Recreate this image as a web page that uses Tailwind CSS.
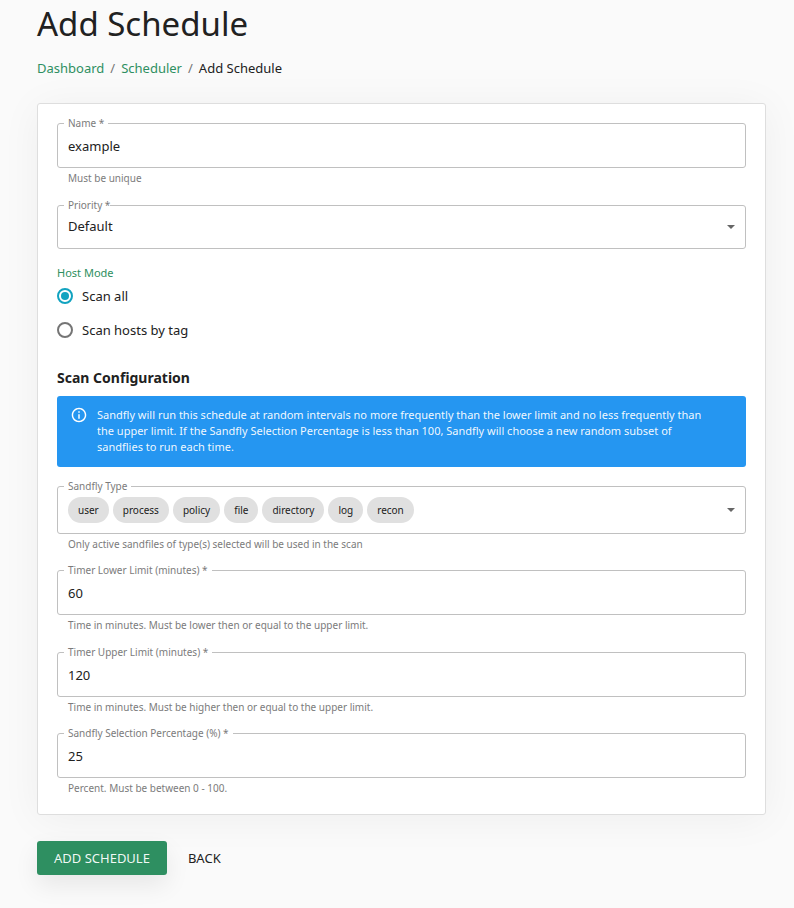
<!DOCTYPE html>
<html lang="en">
<head>
    <meta charset="UTF-8">
    <meta name="viewport" content="width=device-width, initial-scale=1.0">
    <title>Add Schedule</title>
    <script src="https://cdn.jsdelivr.net/npm/@tailwindcss/browser@4"></script>
</head>
<body class="min-h-screen bg-[#fafafa] font-['Noto_Sans',sans-serif] text-[13px] leading-5 text-[#212121]">

    <div class="pl-[37px] pr-7 pt-1 pb-8">
        <h1 class="text-[33px] leading-10">Add Schedule</h1>

        <nav aria-label="Breadcrumb" class="mt-3.5">
            <ol class="flex items-center gap-1.5">
                <li><a href="#" class="text-[#2e8f61]">Dashboard</a></li>
                <li aria-hidden="true" class="text-[#757575]">/</li>
                <li><a href="#" class="text-[#2e8f61]">Scheduler</a></li>
                <li aria-hidden="true" class="text-[#757575]">/</li>
                <li aria-current="page">Add Schedule</li>
            </ol>
        </nav>

        <form>
            <div class="mt-[25px] rounded-[3px] border border-[#dedede] bg-white px-[19px] pt-[19px] pb-[18px] shadow-[0_4px_40px_rgba(0,0,0,0.05)]">

                <div class="relative">
                    <label for="name" class="absolute left-[7px] -top-2 bg-white px-1 text-[10px] leading-4 text-[#7b7b7b]">Name *</label>
                    <input id="name" type="text" value="example" class="block h-[45px] w-full rounded-[3px] border border-[#c0c0c0] px-2.5">
                    <p class="mt-0.5 px-[11px] text-[10px] leading-4 text-[#7b7b7b]">Must be unique</p>
                </div>

                <div class="relative mt-[19px]">
                    <label for="priority" class="absolute left-[7px] -top-2 bg-white pl-1 text-[10px] leading-4 text-[#7b7b7b]">Priority *</label>
                    <select id="priority" class="block h-11 w-full appearance-none rounded-[3px] border border-[#c0c0c0] px-2.5 pb-0.5">
                        <option>Default</option>
                    </select>
                    <svg class="pointer-events-none absolute right-[11px] top-5 h-1 w-2 fill-[#666]" viewBox="0 0 8 4"><path d="M0 0h8L4 4z"/></svg>
                </div>

                <fieldset class="mt-[18px]">
                    <legend class="text-[11px] leading-3 text-[#2e8f61]">Host Mode</legend>
                    <label class="flex h-[34px] items-center gap-[9px]">
                        <input type="radio" name="host-mode" checked class="size-4 appearance-none rounded-full border-2 border-[#757575] p-0.5 checked:border-[#12a3c0] checked:bg-[#12a3c0] checked:bg-clip-content">
                        Scan all
                    </label>
                    <label class="flex h-[34px] items-center gap-[9px]">
                        <input type="radio" name="host-mode" class="size-4 appearance-none rounded-full border-2 border-[#757575] p-0.5 checked:border-[#12a3c0] checked:bg-[#12a3c0] checked:bg-clip-content">
                        Scan hosts by tag
                    </label>
                </fieldset>

                <h2 class="mt-[19px] text-sm leading-6 font-bold">Scan Configuration</h2>

                <div role="alert" class="mt-1.5 flex gap-2.5 rounded-[3px] bg-[#2596f1] pt-[11px] pr-[26px] pb-3 pl-3.5 text-[11px] leading-4 text-white/95">
                    <svg class="size-4 shrink-0 fill-white" viewBox="1 1 22 22"><path d="M11 7h2v2h-2zM11 11h2v6h-2zM12 2C6.48 2 2 6.48 2 12s4.48 10 10 10 10-4.48 10-10S17.52 2 12 2zm0 18c-4.41 0-8-3.59-8-8s3.59-8 8-8 8 3.59 8 8-3.59 8-8 8z"/></svg>
                    <p>Sandfly will run this schedule at random intervals no more frequently than the lower limit and no less frequently than the upper limit. If the Sandfly Selection Percentage is less than 100, Sandfly will choose a new random subset of sandflies to run each time.</p>
                </div>

                <div class="relative mt-[19px]">
                    <label for="sandfly-type" class="absolute left-[7px] -top-2 bg-white px-1 text-[10px] leading-4 text-[#7b7b7b]">Sandfly Type</label>
                    <button id="sandfly-type" type="button" aria-haspopup="listbox" class="flex h-12 w-full items-center gap-1 rounded-[3px] border border-[#c0c0c0] px-2.5 text-[10px] leading-[26px]">
                        <span class="rounded-full bg-[#e0e0e0] px-2.5">user</span>
                        <span class="rounded-full bg-[#e0e0e0] px-2.5">process</span>
                        <span class="rounded-full bg-[#e0e0e0] px-2.5">policy</span>
                        <span class="rounded-full bg-[#e0e0e0] px-2.5">file</span>
                        <span class="rounded-full bg-[#e0e0e0] px-2.5">directory</span>
                        <span class="rounded-full bg-[#e0e0e0] px-2.5">log</span>
                        <span class="rounded-full bg-[#e0e0e0] px-2.5">recon</span>
                        <svg class="ml-auto h-1 w-2 fill-[#666]" viewBox="0 0 8 4"><path d="M0 0h8L4 4z"/></svg>
                    </button>
                    <p class="mt-0.5 px-[11px] text-[10px] leading-4 text-[#7b7b7b]">Only active sandfiles of type(s) selected will be used in the scan</p>
                </div>

                <div class="relative mt-[18px]">
                    <label for="lower-limit" class="absolute left-[7px] -top-2 bg-white px-1 text-[10px] leading-4 text-[#7b7b7b]">Timer Lower Limit (minutes) *</label>
                    <input id="lower-limit" type="text" inputmode="numeric" value="60" class="block h-[45px] w-full rounded-[3px] border border-[#c0c0c0] px-2.5">
                    <p class="mt-0.5 px-[11px] text-[10px] leading-4 text-[#7b7b7b]">Time in minutes. Must be lower then or equal to the upper limit.</p>
                </div>

                <div class="relative mt-[19px]">
                    <label for="upper-limit" class="absolute left-[7px] -top-2 bg-white px-1 text-[10px] leading-4 text-[#7b7b7b]">Timer Upper Limit (minutes) *</label>
                    <input id="upper-limit" type="text" inputmode="numeric" value="120" class="block h-[45px] w-full rounded-[3px] border border-[#c0c0c0] px-2.5">
                    <p class="mt-0.5 px-[11px] text-[10px] leading-4 text-[#7b7b7b]">Time in minutes. Must be higher then or equal to the upper limit.</p>
                </div>

                <div class="relative mt-[18px]">
                    <label for="percentage" class="absolute left-[7px] -top-2 bg-white px-1 text-[10px] leading-4 text-[#7b7b7b]">Sandfly Selection Percentage (%) *</label>
                    <input id="percentage" type="text" inputmode="numeric" value="25" class="block h-[45px] w-full rounded-[3px] border border-[#c0c0c0] px-2.5">
                    <p class="mt-0.5 px-[11px] text-[10px] leading-4 text-[#7b7b7b]">Percent. Must be between 0 - 100.</p>
                </div>
            </div>

            <div class="mt-[26px] flex gap-1">
                <button type="submit" class="h-[34px] rounded-[3px] bg-[#2e8f61] px-[17px] text-white/95 shadow-[0_10px_24px_rgba(0,0,0,0.08)]">ADD SCHEDULE</button>
                <button type="button" class="h-[34px] rounded-[3px] px-[17px]">BACK</button>
            </div>
        </form>
    </div>

</body>
</html>
